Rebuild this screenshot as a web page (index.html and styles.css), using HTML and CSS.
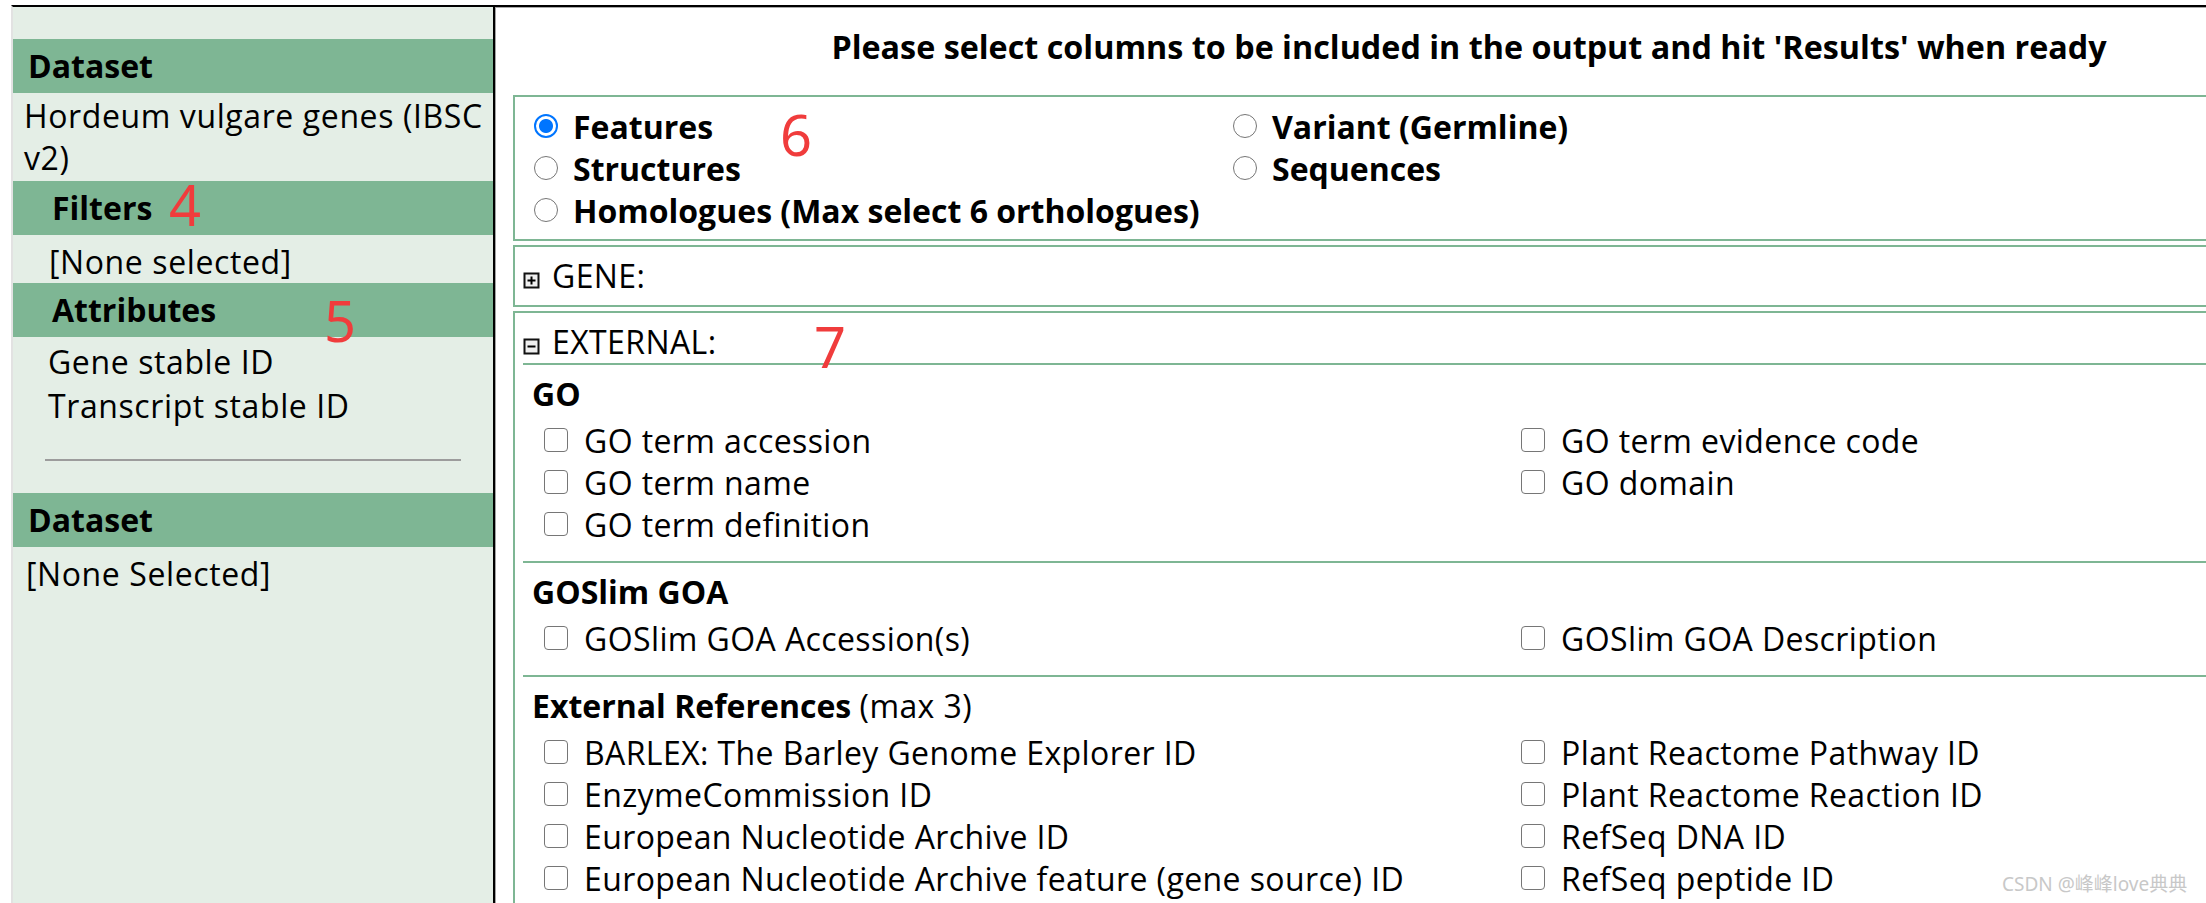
FILE: index.html
```html
<!DOCTYPE html>
<html lang="en">
<head>
<meta charset="utf-8">
<title>BioMart - Attributes</title>
<link rel="stylesheet" href="styles.css">
</head>
<body>
<div class="page">
  <div class="frame">
    <aside class="sidebar">
      <div class="sb-head sb-head--top">Dataset</div>
      <div class="sb-text sb-dataset">Hordeum vulgare genes (IBSC v2)</div>
      <div class="sb-head sb-head--sub">Filters</div>
      <div class="sb-text sb-filters">[None selected]</div>
      <div class="sb-head sb-head--sub">Attributes</div>
      <ul class="sb-list">
        <li>Gene stable ID</li>
        <li>Transcript stable ID</li>
      </ul>
      <hr class="sb-rule">
      <div class="sb-head sb-head--top">Dataset</div>
      <div class="sb-text sb-none">[None Selected]</div>
    </aside>

    <main class="main">
      <h1 class="title">Please select columns to be included in the output and hit 'Results' when ready</h1>

      <div class="box radios">
        <label class="radio-item"><input type="radio" name="page" checked><span>Features</span></label>
        <label class="radio-item"><input type="radio" name="page"><span>Variant (Germline)</span></label>
        <label class="radio-item"><input type="radio" name="page"><span>Structures</span></label>
        <label class="radio-item"><input type="radio" name="page"><span>Sequences</span></label>
        <label class="radio-item"><input type="radio" name="page"><span>Homologues (Max select 6 orthologues)</span></label>
      </div>

      <div class="box collapsed">
        <div class="box-head"><svg class="toggle" viewBox="0 0 17 17" width="17" height="17"><rect x="1.5" y="1.5" width="14" height="14" fill="#efefef" stroke="#111" stroke-width="2"/><path d="M4.5 8.5h8M8.5 4.5v8" stroke="#000" stroke-width="2"/></svg>GENE:</div>
      </div>

      <div class="box expanded">
        <div class="box-head box-head--open"><svg class="toggle" viewBox="0 0 17 17" width="17" height="17"><rect x="1.5" y="1.5" width="14" height="14" fill="#efefef" stroke="#111" stroke-width="2"/><path d="M4.5 8.5h8" stroke="#000" stroke-width="2"/></svg>EXTERNAL:</div>

        <section class="group">
          <h2 class="group-title">GO</h2>
          <div class="attr-grid">
            <label class="check-item"><input type="checkbox"><span>GO term accession</span></label>
            <label class="check-item"><input type="checkbox"><span>GO term evidence code</span></label>
            <label class="check-item"><input type="checkbox"><span>GO term name</span></label>
            <label class="check-item"><input type="checkbox"><span>GO domain</span></label>
            <label class="check-item"><input type="checkbox"><span>GO term definition</span></label>
          </div>
        </section>

        <section class="group">
          <h2 class="group-title">GOSlim GOA</h2>
          <div class="attr-grid">
            <label class="check-item"><input type="checkbox"><span>GOSlim GOA Accession(s)</span></label>
            <label class="check-item"><input type="checkbox"><span>GOSlim GOA Description</span></label>
          </div>
        </section>

        <section class="group">
          <h2 class="group-title">External References <span class="group-note">(max 3)</span></h2>
          <div class="attr-grid">
            <label class="check-item"><input type="checkbox"><span>BARLEX: The Barley Genome Explorer ID</span></label>
            <label class="check-item"><input type="checkbox"><span>Plant Reactome Pathway ID</span></label>
            <label class="check-item"><input type="checkbox"><span>EnzymeCommission ID</span></label>
            <label class="check-item"><input type="checkbox"><span>Plant Reactome Reaction ID</span></label>
            <label class="check-item"><input type="checkbox"><span>European Nucleotide Archive ID</span></label>
            <label class="check-item"><input type="checkbox"><span>RefSeq DNA ID</span></label>
            <label class="check-item"><input type="checkbox"><span>European Nucleotide Archive feature (gene source) ID</span></label>
            <label class="check-item"><input type="checkbox"><span>RefSeq peptide ID</span></label>
          </div>
        </section>
      </div>
    </main>
  </div>

  <span class="mark mark-4">4</span>
  <span class="mark mark-5">5</span>
  <span class="mark mark-6">6</span>
  <span class="mark mark-7">7</span>
  <div class="watermark">CSDN @峰峰love典典</div>
</div>
</body>
</html>
```

FILE: styles.css
```css
html, body {
  margin: 0;
  padding: 0;
  background: #ffffff;
}

body {
  font-family: "Open Sans", "Noto Sans", "Noto Sans CJK SC", sans-serif;
  font-size: 32px;
  color: #000;
  overflow: hidden;
}

.page {
  position: relative;
  width: 2206px;
  height: 903px;
  overflow: hidden;
  padding: 5px 0 0 11px;
  box-sizing: border-box;
}

.frame {
  display: flex;
  height: 898px;
  box-sizing: border-box;
  border-top: 2px solid #000;
  border-left: 2px solid #e2e2e2;
}

/* ---------- sidebar ---------- */
.sidebar {
  flex: none;
  width: 480px;
  background: #e4eee6;
  border-right: 2px solid #000;
  padding-top: 32px;
}

.sb-head {
  height: 54px;
  line-height: 54px;
  background: #7eb694;
  font-weight: 700;
}

.sb-head--top { padding-left: 15px; }
.sb-head--sub { padding-left: 39px; }

.sb-text {
  line-height: 42px;
  letter-spacing: 0.6px;
}

.sb-dataset {
  padding: 2px 10px 2px 11px;
}

.sb-filters {
  padding: 6px 0 0 36px;
}

.sb-list {
  list-style: none;
  margin: 0;
  padding: 3px 0 0 35px;
  line-height: 44px;
  letter-spacing: 0.6px;
}

.sb-rule {
  margin: 31px 32px 32px 32px;
  border: 0;
  height: 2px;
  background: #9c9c9c;
}

.sb-none {
  padding: 6px 0 0 13px;
}

/* ---------- main ---------- */
.main {
  flex: none;
  width: 1946px;
  border-left: 1px solid #a3a3a3;
  border-top: 1px solid #a8a8a8;
  background: #fff;
}

.title {
  margin: 0 0 28px;
  padding-top: 17px;
  font-size: 32.3px;
  line-height: 42px;
  font-weight: 700;
  text-align: center;
}

.box {
  margin: 0 0 4px 17px;
  border: 2px solid #7eb694;
}

.radios {
  display: grid;
  grid-template-columns: 699px auto;
  padding: 8px 0 8px 19px;
}

.radio-item {
  display: flex;
  align-items: center;
  height: 42px;
  font-weight: 700;
  white-space: nowrap;
}

.radio-item input {
  appearance: none;
  -webkit-appearance: none;
  flex: none;
  width: 24px;
  height: 24px;
  margin: 0 15px 0 0;
  border: 1px solid #767676;
  border-radius: 50%;
  background: #fff;
  box-sizing: border-box;
}

.radio-item input:checked {
  border: 2px solid #0075ff;
  background: radial-gradient(circle, #0075ff 0 6.5px, #fff 7.5px);
}

.collapsed {
  padding: 8px 0 8px 8px;
}

.expanded {
  padding: 8px 0 0 8px;
}

.box-head {
  line-height: 42px;
  white-space: nowrap;
  letter-spacing: 0.4px;
}

.box-head--open {
  border-bottom: 2px solid #7eb694;
}

.toggle {
  margin-right: 12px;
  vertical-align: -1px;
}

.group {
  padding: 8px 0 16px 9px;
  border-bottom: 2px solid #7eb694;
}

.group-title {
  margin: 0 0 4px;
  font-size: 32px;
  line-height: 42px;
  font-weight: 700;
}

.group-note {
  font-weight: 400;
  letter-spacing: 0.4px;
}

.attr-grid {
  display: grid;
  grid-template-columns: 977px auto;
}

.check-item {
  display: flex;
  align-items: center;
  height: 42px;
  padding-left: 12px;
  white-space: nowrap;
  letter-spacing: 0.4px;
}

.check-item input {
  appearance: none;
  -webkit-appearance: none;
  flex: none;
  width: 24px;
  height: 24px;
  margin: 0 16px 0 0;
  border: 1px solid #767676;
  border-radius: 4px;
  background: #fff;
  box-sizing: border-box;
}

/* ---------- annotations ---------- */
.mark {
  position: absolute;
  font-family: "Noto Sans", "Open Sans", sans-serif;
  font-size: 56px;
  line-height: 56px;
  font-weight: 400;
  color: #f03c3c;
}

.mark-4 { left: 169px; top: 176px; }
.mark-5 { left: 324px; top: 292px; }
.mark-6 { left: 780px; top: 106px; }
.mark-7 { left: 814px; top: 318px; }

.watermark {
  position: absolute;
  left: 2002px;
  top: 872px;
  font-family: "Noto Sans", "Noto Sans CJK SC", sans-serif;
  font-size: 19px;
  line-height: 24px;
  color: #c8c8c8;
  white-space: nowrap;
}
```
